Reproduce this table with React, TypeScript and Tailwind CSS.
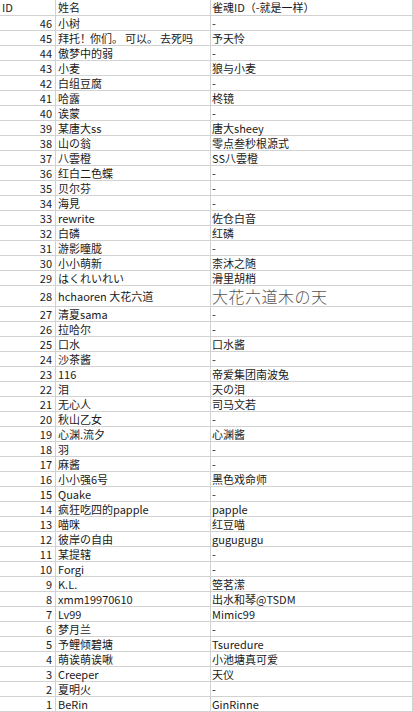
import React from "react";

const rows: [number, string, string][] = [
  [46, "小树", "-"],
  [45, "拜托！你们。可以。去死吗", "予天怜"],
  [44, "傲梦中的弱", "-"],
  [43, "小麦", "狼与小麦"],
  [42, "白组豆腐", "-"],
  [41, "哈露", "柊镜"],
  [40, "诶蒙", "-"],
  [39, "某唐大ss", "唐大sheey"],
  [38, "山の翁", "零点叁秒根源式"],
  [37, "八雲橙", "SS八雲橙"],
  [36, "红白二色蝶", "-"],
  [35, "贝尔芬", "-"],
  [34, "海見", "-"],
  [33, "rewrite", "佐仓白音"],
  [32, "白磷", "红磷"],
  [31, "游影曈胧", "-"],
  [30, "小小萌新", "柰沐之随"],
  [29, "はくれいれい", "滑里胡梢"],
  [28, "hchaoren 大花六道", "大花六道木の天"],
  [27, "清夏sama", "-"],
  [26, "拉哈尔", "-"],
  [25, "口水", "口水酱"],
  [24, "沙茶酱", "-"],
  [23, "116", "帝爱集团南波兔"],
  [22, "泪", "天の泪"],
  [21, "无心人", "司马文若"],
  [20, "秋山乙女", "-"],
  [19, "心渊.流夕", "心渊酱"],
  [18, "羽", "-"],
  [17, "麻酱", "-"],
  [16, "小小强6号", "黑色戏命师"],
  [15, "Quake", "-"],
  [14, "疯狂吃四的papple", "papple"],
  [13, "喵咪", "红豆喵"],
  [12, "彼岸の自由", "gugugugu"],
  [11, "某提辖", "-"],
  [10, "Forgi", "-"],
  [9, "K.L.", "箜茗潆"],
  [8, "xmm19970610", "出水和琴@TSDM"],
  [7, "Lv99", "Mimic99"],
  [6, "梦月兰", "-"],
  [5, "予鲤倾碧塘", "Tsuredure"],
  [4, "萌诶萌诶啾", "小池塘真可爱"],
  [3, "Creeper", "天仪"],
  [2, "夏明火", "-"],
  [1, "BeRin", "GinRinne"],
];

function Spaced({ s }: { s: string }) {
  const out: React.ReactNode[] = [];
  let i = 0;
  for (const ch of s) {
    const cls =
      ch === "！"
        ? "inline-block w-[10px] text-center"
        : ch === "。"
        ? "inline-block w-[13px] text-left"
        : "inline-block w-[11px] text-left";
    out.push(
      <span key={i++} className={cls}>
        {ch}
      </span>
    );
  }
  return <span className="flex items-center">{out}</span>;
}

export default function App() {
  return (
    <div
      className="w-[413px] h-[712px] bg-white text-[11px] text-[#1a1a1a] overflow-hidden"
      style={{ fontFamily: '"Noto Sans CJK SC", sans-serif' }}
    >
      <div className="flex h-[16px] border-b border-[#d2d2d2] leading-none">
        <div className="w-[56px] border-r border-[#d2d2d2] flex items-center pl-[2px]">ID</div>
        <div className="w-[155px] border-r border-[#d2d2d2] flex items-center pl-[2px]">姓名</div>
        <div className="w-[202px] border-r border-[#d2d2d2] flex items-center pl-[1px] whitespace-nowrap">
          雀魂ID（-就是一样）
        </div>
      </div>
      {rows.map(([id, name, mj]) => {
        const big = id === 28;
        return (
          <div
            key={id}
            className={
              big
                ? "flex h-[21px] border-b border-[#d2d2d2] leading-none"
                : "flex h-[15px] border-b border-[#d2d2d2] leading-none"
            }
          >
            <div className="w-[56px] border-r border-[#d2d2d2] flex items-center justify-end pr-[3px]">
              {id}
            </div>
            <div className="w-[155px] border-r border-[#d2d2d2] flex items-center pl-[2px] whitespace-nowrap">
              {id === 45 ? <Spaced s={name} /> : name}
            </div>
            <div className="w-[202px] border-r border-[#d2d2d2] flex items-center pl-[1px] whitespace-nowrap">
              {big ? (
                <span
                  className="text-[16px] leading-[18px] font-light text-[#555555] tracking-[0.5px]"
                  style={{ fontFamily: '"Noto Sans CJK JP", sans-serif' }}
                >
                  {mj}
                </span>
              ) : (
                mj
              )}
            </div>
          </div>
        );
      })}
    </div>
  );
}
